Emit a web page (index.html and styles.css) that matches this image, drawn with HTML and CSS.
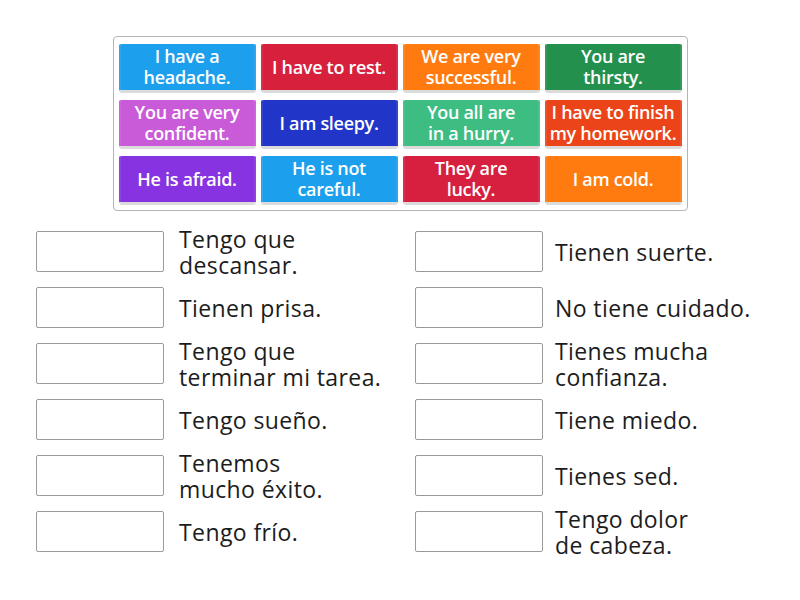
FILE: index.html
```html
<!DOCTYPE html>
<html lang="es">
<head>
<meta charset="utf-8">
<link rel="stylesheet" href="styles.css">
</head>
<body>
<div class="bank">
  <div class="tile c-blue">I have a<br>headache.</div>
  <div class="tile c-red">I have to rest.</div>
  <div class="tile c-orange">We are very<br>successful.</div>
  <div class="tile c-green">You are<br>thirsty.</div>
  <div class="tile c-pink">You are very<br>confident.</div>
  <div class="tile c-navy">I am sleepy.</div>
  <div class="tile c-mint">You all are<br>in a hurry.</div>
  <div class="tile c-vermilion">I have to finish<br>my homework.</div>
  <div class="tile c-purple">He is afraid.</div>
  <div class="tile c-blue">He is not<br>careful.</div>
  <div class="tile c-crimson">They are<br>lucky.</div>
  <div class="tile c-orange">I am cold.</div>
</div>
<div class="targets">
  <div class="col">
    <div class="row"><div class="box"></div><div class="label">Tengo que<br>descansar.</div></div>
    <div class="row"><div class="box"></div><div class="label">Tienen prisa.</div></div>
    <div class="row"><div class="box"></div><div class="label">Tengo que<br>terminar mi tarea.</div></div>
    <div class="row"><div class="box"></div><div class="label">Tengo sueño.</div></div>
    <div class="row"><div class="box"></div><div class="label">Tenemos<br>mucho éxito.</div></div>
    <div class="row"><div class="box"></div><div class="label">Tengo frío.</div></div>
  </div>
  <div class="col col-right">
    <div class="row"><div class="box"></div><div class="label">Tienen suerte.</div></div>
    <div class="row"><div class="box"></div><div class="label">No tiene cuidado.</div></div>
    <div class="row"><div class="box"></div><div class="label">Tienes mucha<br>confianza.</div></div>
    <div class="row"><div class="box"></div><div class="label">Tiene miedo.</div></div>
    <div class="row"><div class="box"></div><div class="label">Tienes sed.</div></div>
    <div class="row"><div class="box"></div><div class="label">Tengo dolor<br>de cabeza.</div></div>
  </div>
</div>
</body>
</html>
```

FILE: styles.css
```css
html, body {
  margin: 0;
  padding: 0;
  background: #ffffff;
}
body {
  font-family: "Open Sans", "Liberation Sans", sans-serif;
  width: 800px;
  height: 600px;
  overflow: hidden;
}
.bank {
  box-sizing: border-box;
  width: 575px;
  margin: 36px auto 0;
  padding: 5px;
  border: 1px solid #b4b4b4;
  border-radius: 4px;
  display: grid;
  grid-template-columns: repeat(4, 1fr);
  grid-auto-rows: 51px;
  gap: 5px;
}
.tile {
  box-sizing: border-box;
  border-radius: 3px;
  color: #ffffff;
  font-size: 18px;
  font-weight: 600;
  line-height: 21px;
  text-align: center;
  display: flex;
  align-items: center;
  justify-content: center;
  border-top: 2px solid rgba(255,255,255,0.18);
  border-bottom: 3px solid rgba(0,0,0,0.14);
  box-shadow: inset 2px 0 0 rgba(255,255,255,0.08), inset -2px 0 0 rgba(255,255,255,0.08);
  background-clip: padding-box;
  letter-spacing: -0.3px;
  white-space: nowrap;
}
.c-blue { background-color: #1c9fec; }
.c-red { background-color: #d7203b; }
.c-orange { background-color: #ff7b10; }
.c-green { background-color: #23904d; }
.c-pink { background-color: #c95ad8; }
.c-navy { background-color: #2235c9; }
.c-mint { background-color: #3dbd82; }
.c-vermilion { background-color: #eb4419; }
.c-purple { background-color: #8733e2; }
.c-crimson { background-color: #d71f40; }

.targets {
  display: flex;
  margin: 20px 0 0 36px;
}
.col {
  width: 379px;
  display: flex;
  flex-direction: column;
  gap: 15px;
}
.row {
  display: flex;
  align-items: center;
  height: 41px;
}
.box {
  box-sizing: border-box;
  width: 128px;
  height: 41px;
  border: 1px solid #9a9a9a;
  border-radius: 2px;
  flex: none;
}
.label {
  margin-left: 15px;
  font-size: 23px;
  line-height: 26px;
  color: #1c1c1c;
  white-space: nowrap;
  letter-spacing: 0.4px;
}
.col-right .label {
  margin-left: 12px;
}
```
